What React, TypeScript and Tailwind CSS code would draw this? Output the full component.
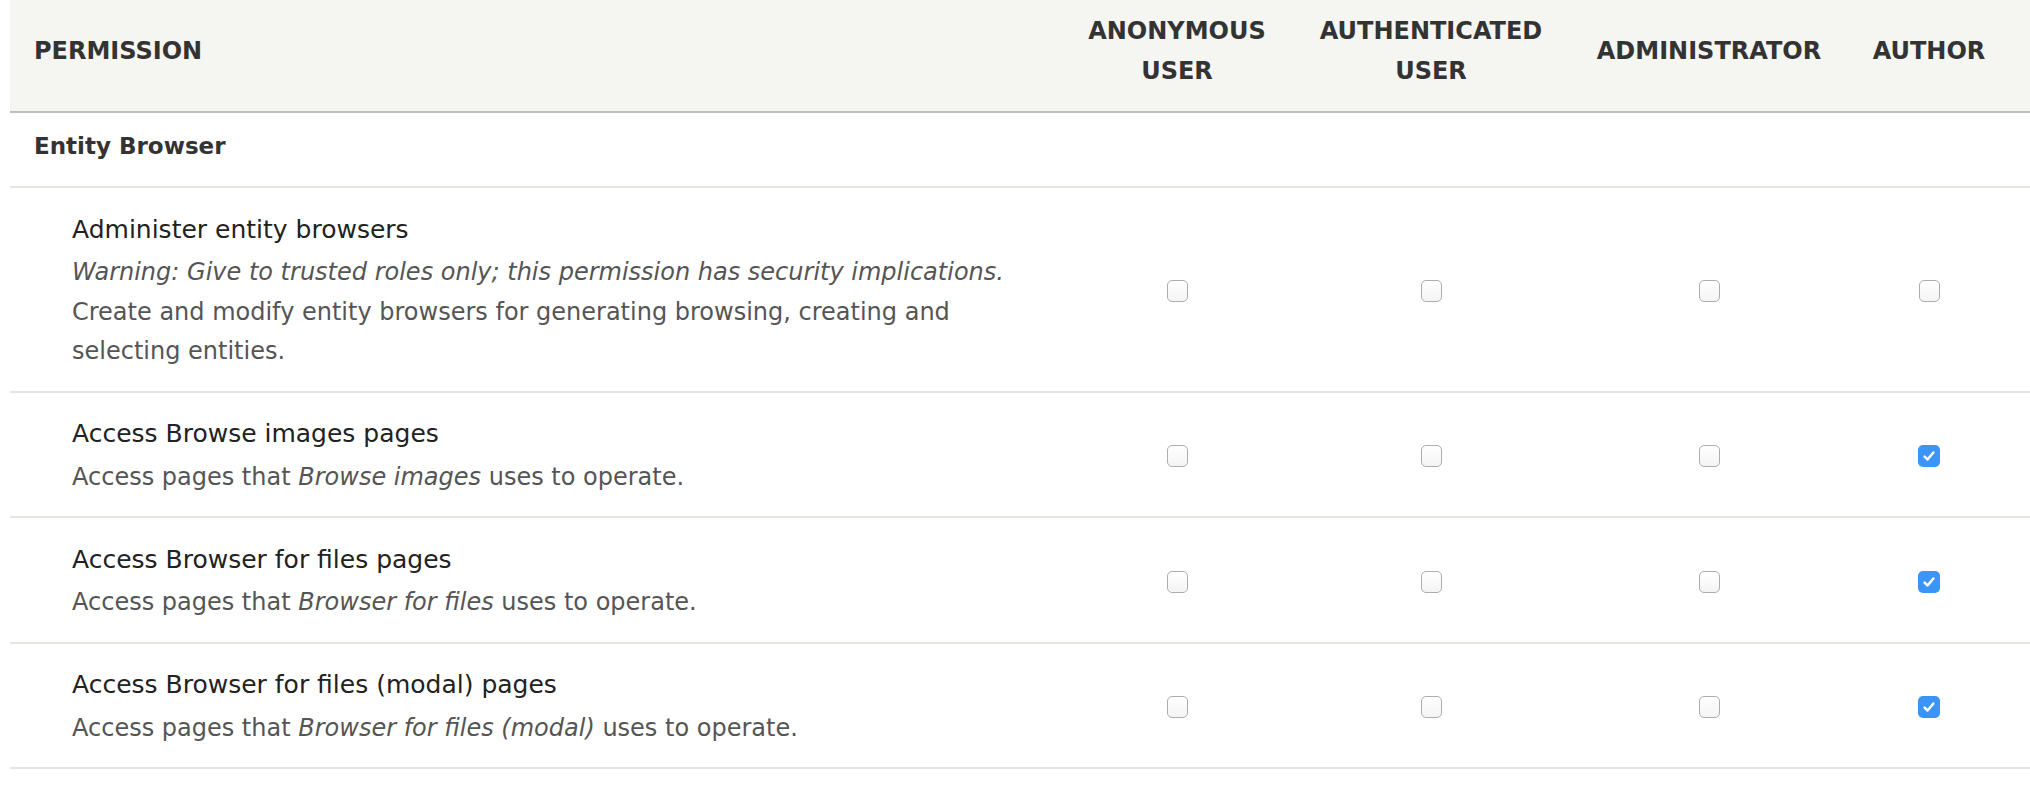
import type { ReactNode } from "react";

type Permission = {
  title: string;
  warning?: boolean;
  description: ReactNode;
  grants: [boolean, boolean, boolean, boolean];
};

const roles = ["Anonymous\nuser", "Authenticated\nuser", "Administrator", "Author"];

const permissions: Permission[] = [
  {
    title: "Administer entity browsers",
    warning: true,
    description:
      "Create and modify entity browsers for generating browsing, creating and selecting entities.",
    grants: [false, false, false, false],
  },
  {
    title: "Access Browse images pages",
    description: (
      <>
        Access pages that <em>Browse images</em> uses to operate.
      </>
    ),
    grants: [false, false, false, true],
  },
  {
    title: "Access Browser for files pages",
    description: (
      <>
        Access pages that <em>Browser for files</em> uses to operate.
      </>
    ),
    grants: [false, false, false, true],
  },
  {
    title: "Access Browser for files (modal) pages",
    description: (
      <>
        Access pages that <em>Browser for files (modal)</em> uses to operate.
      </>
    ),
    grants: [false, false, false, true],
  },
];

const gridCols = "grid grid-cols-[1072px_190px_318px_238px_202px]";

export default function App() {
  return (
    <div className="min-h-[786px] bg-white pl-[10px] font-['DejaVu_Sans',sans-serif] text-[#222330]">
      <div
        className={`${gridCols} h-[113px] border-b-2 border-[#bfbfba] bg-[#f5f5f2] pb-[9px] text-[24px] font-bold uppercase leading-[40px] text-[#333]`}
      >
        <div className="flex items-center pl-[24px]">Permission</div>
        {roles.map((role) => (
          <div
            key={role}
            className="flex items-center justify-center whitespace-pre-line text-center"
          >
            {role}
          </div>
        ))}
      </div>

      <div className="h-[75px] border-b-2 border-[#e6e4df] pl-[24px] pt-[13px] text-[23px] font-bold leading-[40px] text-[#333]">
        Entity Browser
      </div>

      {permissions.map((permission) => (
        <PermissionRow key={permission.title} permission={permission} />
      ))}
    </div>
  );
}

function PermissionRow({ permission }: { permission: Permission }) {
  return (
    <div className={`${gridCols} border-b-2 border-[#e6e4df]`}>
      <div className="pb-[19px] pl-[62px] pt-[21.5px]">
        <div className="text-[25px] leading-[40px] text-[#222]">
          {permission.title}
        </div>
        <div className="mt-[3.5px] w-[960px] text-[24px] leading-[39.5px] text-[#555]">
          {permission.warning ? (
            <em className="block">
              Warning: Give to trusted roles only; this permission has security
              implications.
            </em>
          ) : null}
          {permission.description}
        </div>
      </div>
      {permission.grants.map((granted, index) => (
        <div key={index} className="flex items-center justify-center pt-[4px]">
          <Checkbox checked={granted} />
        </div>
      ))}
    </div>
  );
}

function Checkbox({ checked }: { checked: boolean }) {
  if (checked) {
    return (
      <span className="flex h-[22px] w-[22px] items-center justify-center rounded-[5px] bg-[#3b94f7]">
        <svg viewBox="0 0 16 16" className="h-[16px] w-[16px]" aria-hidden="true">
          <path
            d="M3.6 8.6 L6.6 11.5 L12.4 4.5"
            fill="none"
            stroke="#fff"
            strokeWidth="2.5"
            strokeLinecap="round"
            strokeLinejoin="round"
          />
        </svg>
      </span>
    );
  }

  return (
    <span className="block h-[22px] w-[21px] rounded-[5px] border-[1.5px] border-[#adadad] bg-gradient-to-b from-white to-[#f4f4f4]" />
  );
}
